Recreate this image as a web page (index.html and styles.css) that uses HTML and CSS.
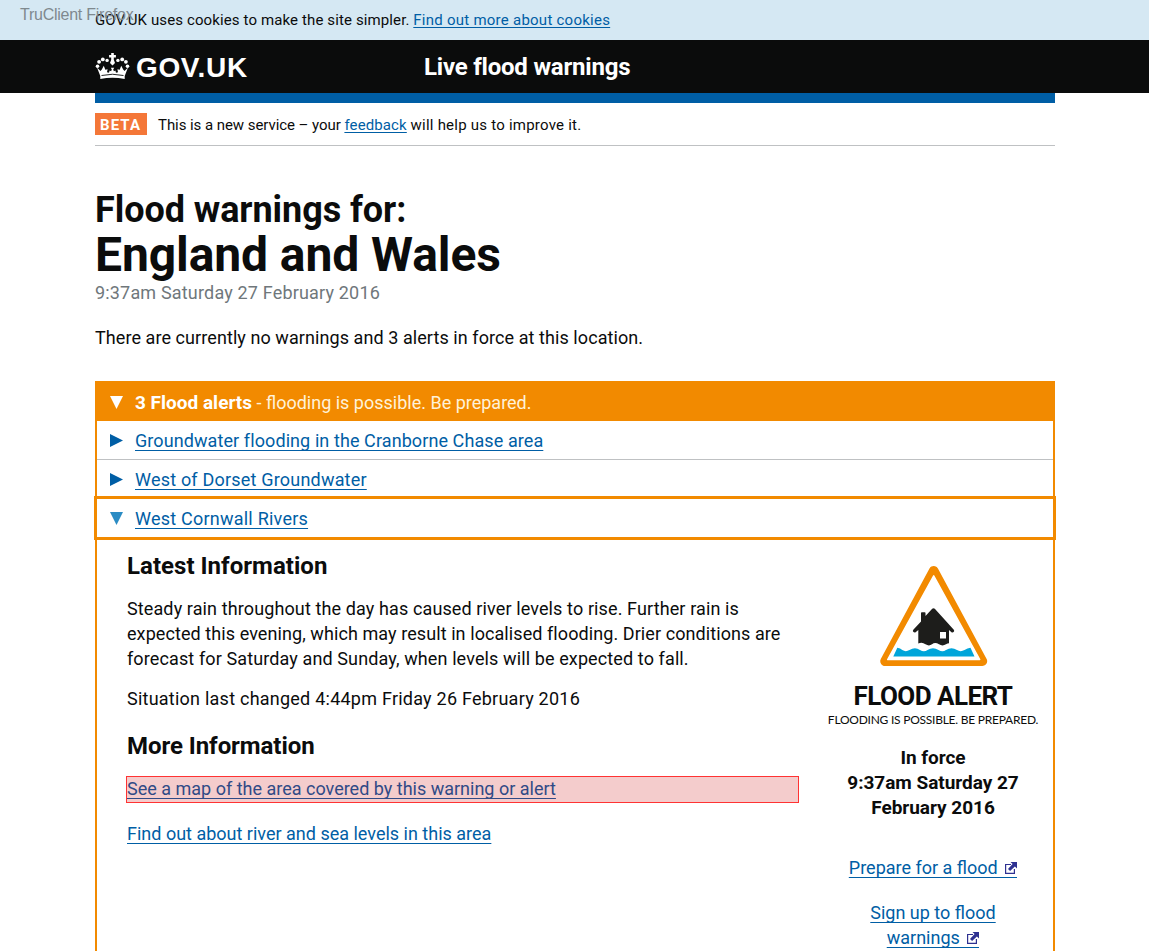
FILE: index.html
```
<!DOCTYPE html>
<html lang="en">
<head>
<meta charset="utf-8">
<title>Live flood warnings</title>
<link rel="stylesheet" href="styles.css">
</head>
<body>
<div class="client-label">TruClient Firefox</div>
<div class="cookie-bar"><p class="wrap small"><span class="ls13">GOV.UK uses cookies to make the site simpler.</span> <a class="ls26" href="#">Find out more about cookies</a></p></div>
<header class="header">
  <div class="wrap header-inner">
    <div class="logo">
      <svg class="crown" viewBox="0 0 36 28" width="36" height="28">
        <g fill="#fff">
          <path d="M16.200 0h2.600v2h2.100v2.600h-2.100v2.200l1.200 3.200-2.500 2.600-2.500-2.600 1.200-3.200V4.600h-2.100V2h2.100z"/>
          <circle cx="12.100" cy="7.400" r="1.700"/><circle cx="7.800" cy="6.400" r="1.900"/><circle cx="4.100" cy="8.800" r="1.900"/><circle cx="2.500" cy="13.200" r="1.800"/>
          <circle cx="22.900" cy="7.400" r="1.700"/><circle cx="27.200" cy="6.400" r="1.900"/><circle cx="30.900" cy="8.800" r="1.900"/><circle cx="32.500" cy="13.200" r="1.800"/>
          <path d="M2 14.500l3.500 3.500 1.300-1.500 2-3.800 1.500 4 2.300-.4-.6 3 2 .4.600-2.200 1.500.7.700-1.700-1-1.700h3.400l-1 1.700.700 1.700 1.500-.7.600 2.200 2-.4-.6-3 2.300.4 1.500-4 2 3.800 1.300 1.500 3.500-3.500-3.300 8.500v3q-12.200-2.400-24.400 0v-3z"/>
        </g>
        <path d="M6.500 22.500q11-2.500 22 0" fill="none" stroke="#0b0c0c" stroke-width=".9"/>
      </svg>
      <span class="logo-text">GOV.UK</span>
    </div>
    <div class="service-name">Live flood warnings</div>
  </div>
</header>
<main class="wrap">
  <div class="phase">
    <span class="tag">BETA</span>
    <p class="small"><span class="phase-intro">This is a new service – your</span> <a class="ls13" href="#">feedback</a> <span class="ls23">will help us to improve it.</span></p>
  </div>
  <h1 class="title"><span class="title-lead">Flood warnings for:</span><span class="title-place">England and Wales</span></h1>
  <p class="date ls18">9:37am Saturday 27 February 2016</p>
  <p class="summary">There are currently no warnings and 3 alerts in force at this location.</p>
  <section class="alerts">
    <div class="alerts-head"><svg class="arrow" viewBox="0 0 14 14"><path d="M0 0h14L7 14z" fill="#fff"/></svg><span><b>3 Flood alerts</b> <span class="alerts-note">- flooding is possible. Be prepared.</span></span></div>
    <div class="row"><svg class="arrow" viewBox="0 0 14 14"><path d="M0 0v14L14 7z" fill="#005ea5"/></svg><a class="ls09" href="#">Groundwater flooding in the Cranborne Chase area</a></div>
    <div class="row"><svg class="arrow" viewBox="0 0 14 14"><path d="M0 0v14L14 7z" fill="#005ea5"/></svg><a class="ls20" href="#">West of Dorset Groundwater</a></div>
    <div class="row row-open"><svg class="arrow" viewBox="0 0 14 14"><path d="M0 0h14L7 14z" fill="#2b8cc4"/></svg><a class="ls23" href="#">West Cornwall Rivers</a></div>
    <div class="details">
      <div class="info">
        <h2>Latest Information</h2>
        <p><span class="ls12">Steady rain throughout the day has caused river levels to rise. Further rain is</span><br><span class="ls08">expected this evening, which may result in localised flooding. Drier conditions are</span><br><span class="ls12">forecast for Saturday and Sunday, when levels will be expected to fall.</span></p>
        <p class="ls24">Situation last changed 4:44pm Friday 26 February 2016</p>
        <h2 class="more">More Information</h2>
        <p class="picked"><a href="#">See a map of the area covered by this warning or alert</a></p>
        <p class="levels"><a href="#">Find out about river and sea levels in this area</a></p>
      </div>
      <aside class="side">
        <svg class="sign" viewBox="0 0 130 115" width="130" height="115">
          <path d="M63.700 10.800L15 101.200h97.400z" fill="#f28a00" stroke="#f28a00" stroke-width="9.600" stroke-linejoin="round"/>
          <path d="M63.700 15.800L17.700 99.500h92z" fill="#fff" stroke="#fff" stroke-width="1.500" stroke-linejoin="round"/>
          <path d="M51 61.500V53q0-.8.800-.8h2.900q.8 0 .8.800v3l6.700-7.200q1.300-1.200 2.600 0L83.800 69.700q1 1.500-.2 2.400-1.200.8-2.400-.2L79 70v13.300q-1.500 0-3 1-3.500 2.300-7 0-4-2.500-7 0-3 2.200-6.500 0-3.500-2.700-7.200-.7V70l-2.400 2q-1.200 1-2.400.1-1.200-1-.2-2.400z" fill="#1d1d1b"/>
          <path d="M70 72h6v6.500h-6z" fill="#fff"/>
          <path d="M23.300 96.500l4-8.800q3 .6 5 2.300 3.500 2.300 7.200 0 5.500-3.700 10.500 0 4 2.400 7.500 0 5.500-3.700 11 0 4 2.400 7.500 0 5.500-3.700 11 0 3.500 2.300 7.500 0 3-1.900 6-2.300l4 8.800z" fill="#00a5da"/>
        </svg>
        <div class="sign-title">FLOOD ALERT</div>
        <div class="sign-text">FLOODING IS POSSIBLE. BE PREPARED.</div>
        <p class="force">In force<br>9:37am Saturday 27<br>February 2016</p>
        <p class="side-link"><a href="#">Prepare for a flood <svg class="ext" viewBox="0 0 12 12"><path d="M6 2.500H.600v8.900H9.400V7" fill="none" stroke="#2e3191" stroke-width="1.200"/><path d="M5.500 0H12v6.500L9.900 4.400 5.100 9 3 6.900 7.600 2.100z" fill="#2e3191"/></svg></a></p>
        <p class="side-link"><a href="#">Sign up to flood<br>warnings <svg class="ext" viewBox="0 0 12 12"><path d="M6 2.500H.600v8.900H9.400V7" fill="none" stroke="#2e3191" stroke-width="1.200"/><path d="M5.500 0H12v6.500L9.900 4.400 5.100 9 3 6.900 7.600 2.100z" fill="#2e3191"/></svg></a></p>
      </aside>
    </div>
  </section>
</main>
</body>
</html>
```
FILE: styles.css
```
* { box-sizing: border-box; }
html { background: #fff; height: 951px; overflow: hidden; }
body { margin: 0; padding-right: 17px; height: 951px; overflow: hidden; font: 18px/25px Roboto, "Liberation Sans", sans-serif; color: #0b0c0c; position: relative; }
p, h1, h2 { margin: 0; }
a { color: #005ea5; text-decoration: underline; text-decoration-thickness: 1px; text-underline-offset: 3px; text-decoration-skip-ink: none; }
.wrap { width: 960px; margin-left: 95px; }
.small { font-size: 15px; line-height: 20px; }
.small a { text-underline-offset: 2px; }
.ls08 { letter-spacing: .08px; }
.ls09 { letter-spacing: .09px; }
.ls12 { letter-spacing: .115px; }
.ls13 { letter-spacing: .12px; }
.ls18 { letter-spacing: .175px; }
.ls20 { letter-spacing: .2px; }
.ls23 { letter-spacing: .23px; }
.ls24 { letter-spacing: .237px; }
.ls26 { letter-spacing: .25px; }

.client-label { position: absolute; left: 20px; top: 5px; font: 16px/20px "Liberation Sans", sans-serif; letter-spacing: -.25px; color: #7f898e; }
.cookie-bar { height: 40px; padding-top: 10px; background: #d5e8f3; }
.header { height: 53px; background: #0b0c0c; color: #fff; }
.header-inner { display: flex; height: 53px; }
.logo { width: 329px; display: flex; padding-top: 13px; }
.crown { width: 36px; height: 28px; }
.logo-text { padding: 1px 0 0 5px; font: bold 28px/28px "Liberation Sans", sans-serif; letter-spacing: .65px; }
.service-name { padding-top: 12px; font-weight: 700; font-size: 24px; line-height: 30px; letter-spacing: -.215px; }

.phase { display: flex; align-items: flex-start; gap: 11px; height: 53px; padding-top: 10px; border-top: 10px solid #005ea5; border-bottom: 1px solid #bfc1c3; }
.phase .small { padding-top: 2px; }
.phase-intro { letter-spacing: -.06px; }
.tag { width: 52px; height: 22px; padding-left: 5px; background: #f47738; color: #fff; font-weight: 700; font-size: 15px; line-height: 24px; letter-spacing: 1.1px; }

.title { padding-top: 44px; font-weight: 700; }
.title span { display: block; }
.title-lead { font-size: 36px; line-height: 40px; letter-spacing: -.06px; }
.title-place { font-size: 48px; line-height: 50px; letter-spacing: -.09px; }
.date { color: #6f777b; }
.summary { padding-top: 20px; letter-spacing: .074px; }

.alerts { margin-top: 31px; height: 570px; border: 2px solid #f28a00; border-bottom: 0; overflow: visible; }
.alerts-head, .row { display: flex; align-items: center; gap: 12px; height: 39px; padding-left: 13px; }
.alerts-head { height: 38px; background: #f28a00; color: #fff; }
.alerts-head b { font-size: 19px; line-height: 20px; }
.alerts-note { color: #fff2d9; }
.row { border-bottom: 1px solid #bfc1c3; }
.row-open { height: 38px; border: 0; outline: 3px solid #f28a00; }
.arrow { width: 13px; height: 13px; flex: none; }

.details { display: flex; padding-left: 30px; }
.info { width: 672px; padding-top: 14px; }
.info h2 { font-size: 24px; line-height: 30px; padding-bottom: 15px; letter-spacing: .03px; }
.info p { padding-bottom: 15px; }
.info .more { padding: 5px 0 15px; letter-spacing: -.06px; }
.info .picked { margin: 0 -1px 0 -1px; width: 673px; height: 27px; padding: 0; border: 1px solid #f33; background: #f4cccc; line-height: 23px; }
.picked a { color: #304a86; }
.info .levels { padding-top: 18px; }
.side { width: 212px; margin-left: 28px; padding-top: 23px; text-align: center; }
.sign { display: block; margin: 0 0 0 43px; }
.sign-title { margin-top: 6px; font-size: 26px; line-height: 30px; font-weight: 700; letter-spacing: -.55px; }
.sign-text { margin: 1px -3px 0; font: 12px/16px Lato, sans-serif; letter-spacing: -.24px; white-space: nowrap; }
.force { padding: 17px 0 0; font-weight: 700; font-size: 19px; letter-spacing: -.03px; }
.side-link { padding-top: 20px; }
.force + .side-link { padding-top: 35px; }
.ext { box-sizing: content-box; width: 12px; height: 12px; padding: 0 0 3px 4px; border-bottom: 1px solid #005ea5; vertical-align: -4px; margin-left: -1px; }
```
